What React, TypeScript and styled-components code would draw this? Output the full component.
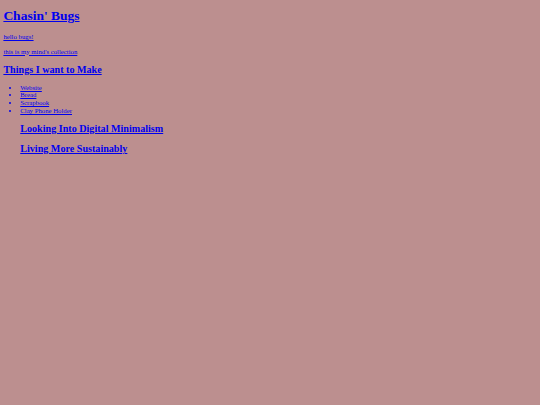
import React from "react";
import styled, { createGlobalStyle } from "styled-components";

const S = 540 / 1280;
const px = (n: number) => `${(n * S).toFixed(3)}px`;

const GlobalStyle = createGlobalStyle`
  html, body {
    background: #bc8f8f;
  }
  body {
    margin: ${px(8)};
    font-family: "Liberation Serif", "Times New Roman", serif;
    color: #000;
  }
`;

const Page = styled.div`
  display: block;
`;

const Link = styled.a`
  color: #0000ee;
  text-decoration: underline;
`;

const Title = styled.h1`
  font-size: ${px(32)};
  line-height: ${px(37)};
  font-weight: bold;
  margin: 5px 0 ${px(21.44)};
`;

const Para = styled.p`
  font-size: ${px(16)};
  line-height: ${px(18.4)};
  margin: ${px(16)} 0;
`;

const Heading = styled.h2`
  font-size: ${px(24)};
  line-height: ${px(27.6)};
  font-weight: bold;
  margin: ${px(19.92)} 0;
`;

const List = styled.ul`
  margin: ${px(16)} 0;
  padding-left: ${px(40)};
  list-style: disc;
`;

const Item = styled.li`
  font-size: ${px(16)};
  line-height: ${px(18.4)};
  color: #0000ee;
`;

const Section = styled.div`
  padding-left: ${px(40)};
`;

const makeItems = ["Website", "Bread", "Scrapbook", "Clay Phone Holder"];

export default function App() {
  return (
    <>
      <GlobalStyle />
      <Page>
        <Title>
          <Link href="#">Chasin' Bugs</Link>
        </Title>
        <Para>
          <Link href="#">hello bugs!</Link>
        </Para>
        <Para>
          <Link href="#">this is my mind's collection</Link>
        </Para>
        <Heading>
          <Link href="#">Things I want to Make</Link>
        </Heading>
        <List>
          {makeItems.map((t) => (
            <Item key={t}>
              <Link href="#">{t}</Link>
            </Item>
          ))}
        </List>
        <Section>
          <Heading>
            <Link href="#">Looking Into Digital Minimalism</Link>
          </Heading>
          <Heading>
            <Link href="#">Living More Sustainably</Link>
          </Heading>
        </Section>
      </Page>
    </>
  );
}
